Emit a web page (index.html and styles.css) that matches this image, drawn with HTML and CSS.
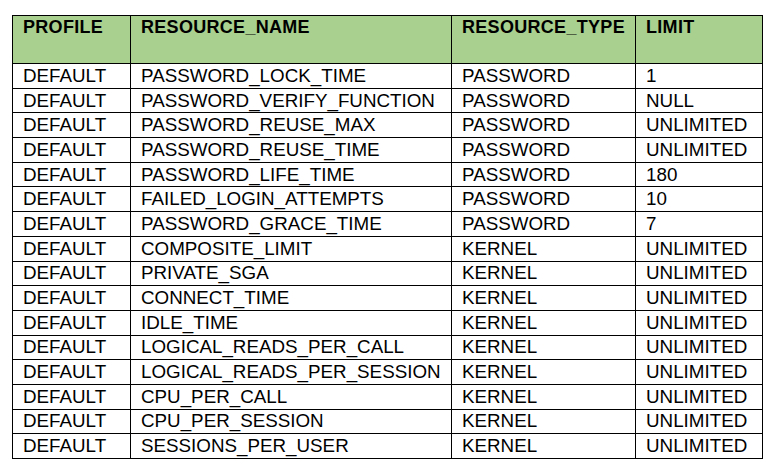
FILE: index.html
```html
<!DOCTYPE html>
<html>
<head>
<meta charset="utf-8">
<link rel="stylesheet" href="styles.css">
</head>
<body>
<table class="grid">
  <colgroup>
    <col class="c1"><col class="c2"><col class="c3"><col class="c4">
  </colgroup>
  <thead>
    <tr><th>PROFILE</th><th>RESOURCE_NAME</th><th>RESOURCE_TYPE</th><th>LIMIT</th></tr>
  </thead>
  <tbody>
    <tr><td>DEFAULT</td><td>PASSWORD_LOCK_TIME</td><td>PASSWORD</td><td>1</td></tr>
    <tr><td>DEFAULT</td><td>PASSWORD_VERIFY_FUNCTION</td><td>PASSWORD</td><td>NULL</td></tr>
    <tr><td>DEFAULT</td><td>PASSWORD_REUSE_MAX</td><td>PASSWORD</td><td>UNLIMITED</td></tr>
    <tr><td>DEFAULT</td><td>PASSWORD_REUSE_TIME</td><td>PASSWORD</td><td>UNLIMITED</td></tr>
    <tr><td>DEFAULT</td><td>PASSWORD_LIFE_TIME</td><td>PASSWORD</td><td>180</td></tr>
    <tr><td>DEFAULT</td><td>FAILED_LOGIN_ATTEMPTS</td><td>PASSWORD</td><td>10</td></tr>
    <tr><td>DEFAULT</td><td>PASSWORD_GRACE_TIME</td><td>PASSWORD</td><td>7</td></tr>
    <tr><td>DEFAULT</td><td>COMPOSITE_LIMIT</td><td>KERNEL</td><td>UNLIMITED</td></tr>
    <tr><td>DEFAULT</td><td>PRIVATE_SGA</td><td>KERNEL</td><td>UNLIMITED</td></tr>
    <tr><td>DEFAULT</td><td>CONNECT_TIME</td><td>KERNEL</td><td>UNLIMITED</td></tr>
    <tr><td>DEFAULT</td><td>IDLE_TIME</td><td>KERNEL</td><td>UNLIMITED</td></tr>
    <tr><td>DEFAULT</td><td>LOGICAL_READS_PER_CALL</td><td>KERNEL</td><td>UNLIMITED</td></tr>
    <tr><td>DEFAULT</td><td>LOGICAL_READS_PER_SESSION</td><td>KERNEL</td><td>UNLIMITED</td></tr>
    <tr><td>DEFAULT</td><td>CPU_PER_CALL</td><td>KERNEL</td><td>UNLIMITED</td></tr>
    <tr><td>DEFAULT</td><td>CPU_PER_SESSION</td><td>KERNEL</td><td>UNLIMITED</td></tr>
    <tr><td>DEFAULT</td><td>SESSIONS_PER_USER</td><td>KERNEL</td><td>UNLIMITED</td></tr>
  </tbody>
</table>
</body>
</html>
```
FILE: styles.css
```css
html, body {
  margin: 0;
  padding: 0;
  background: #ffffff;
}
body {
  padding: 15px 0 0 12px;
  font-family: "Liberation Sans", Arial, sans-serif;
  color: #000;
}
.grid {
  border-collapse: collapse;
  table-layout: fixed;
  width: 750px;
  font-size: 18.8px;
}
.c1 { width: 118px; }
.c2 { width: 321px; }
.c3 { width: 184px; }
.c4 { width: 127px; }
.grid th, .grid td {
  border: 1px solid #000;
  padding: 0 0 0 10px;
  text-align: left;
  white-space: nowrap;
  overflow: hidden;
}
.grid thead tr {
  height: 48px;
}
.grid th {
  background: #a9d08e;
  font-weight: bold;
  font-size: 18px;
  letter-spacing: 0.3px;
  vertical-align: top;
  padding-top: 1px;
  line-height: 20px;
}
.grid tbody tr {
  height: 24.69px;
}
.grid td {
  vertical-align: middle;
  line-height: 22px;
}
```
